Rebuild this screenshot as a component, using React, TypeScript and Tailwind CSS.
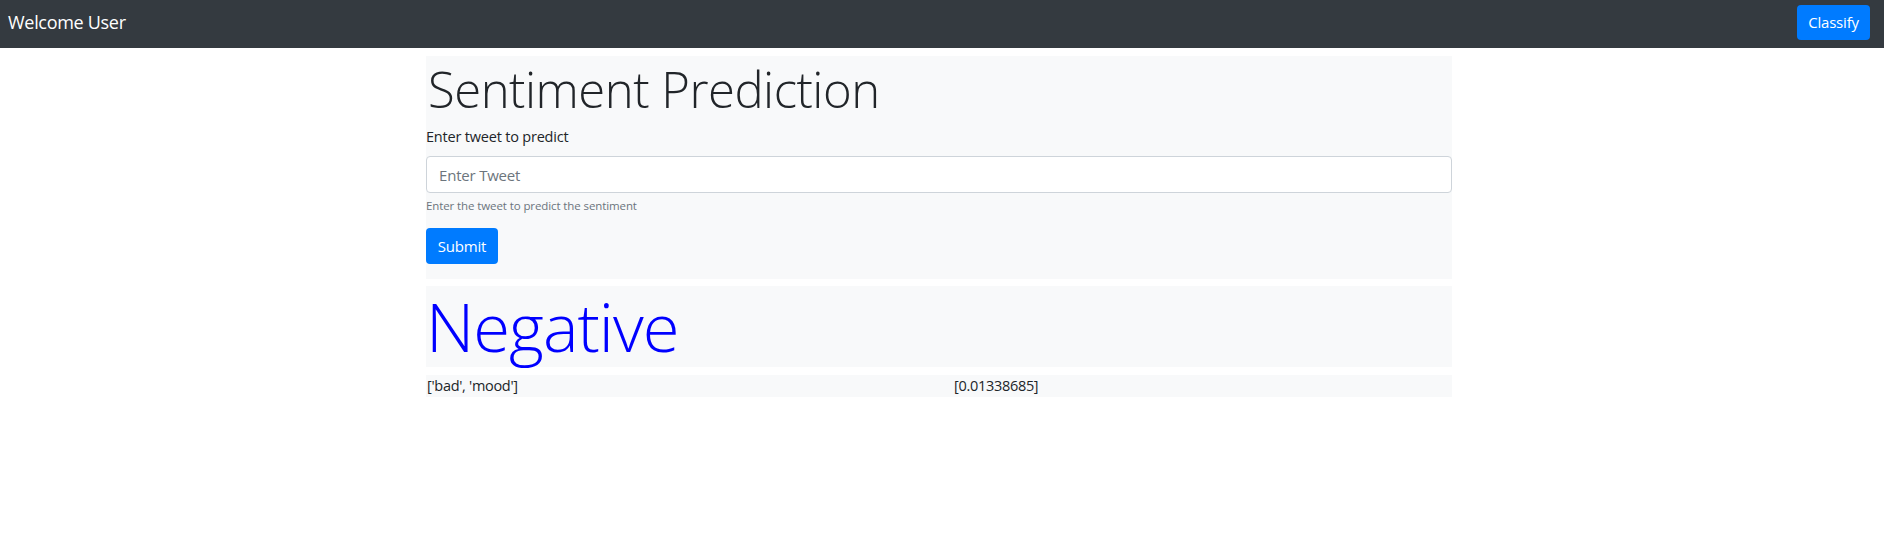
const App = () => {
  return (
    <div className="min-h-screen bg-white font-['Open_Sans',sans-serif] text-[#212529]">
      <nav className="h-[48px] bg-[#343a40] flex items-start justify-between pl-[8px] pr-[14px]">
        <span className="mt-[7px] text-[18px] text-white leading-[30px] tracking-[-0.3px]">Welcome User</span>
        <button className="mt-[5px] h-[35px] w-[73px] rounded-[4px] bg-[#007bff] text-white text-[15px] tracking-[-0.2px]">
          Classify
        </button>
      </nav>

      <div className="w-[1026px] ml-[426px] pt-[8px]">
        <div className="bg-[#f8f9fa] pb-[15px]">
          <h1 className="text-[49px] font-light leading-[66px] pl-[2px] tracking-[-0.5px]">Sentiment Prediction</h1>
          <div className="mt-[4px]">
            <label className="block text-[14.5px] leading-[22px] tracking-[-0.2px]">Enter tweet to predict</label>
            <input
              className="mt-[8px] block w-full h-[37px] rounded-[4px] border border-[#ced4da] bg-white px-[12px] text-[15px] placeholder:text-[#6c757d] tracking-[-0.2px] outline-none"
              placeholder="Enter Tweet"
            />
            <small className="block mt-[4px] text-[11.5px] leading-[18px] text-[#6c757d] tracking-[-0.1px]">
              Enter the tweet to predict the sentiment
            </small>
          </div>
          <button className="mt-[13px] h-[36px] w-[72px] rounded-[4px] bg-[#007bff] text-white text-[15px] tracking-[-0.2px]">
            Submit
          </button>
        </div>

        <div className="mt-[7px] bg-[#f8f9fa] h-[81px] flex items-center">
          <h2 className="text-[67px] font-light text-[#0000ff] leading-[81px] tracking-[-1px]">Negative</h2>
        </div>

        <div className="mt-[8px] bg-[#f8f9fa] h-[22px] grid grid-cols-[528px_1fr] items-center text-[14.5px] leading-[22px] tracking-[-0.3px]">
          <div className="pl-[1px]">['bad', 'mood']</div>
          <div>[0.01338685]</div>
        </div>
      </div>
    </div>
  );
};

export default App;
